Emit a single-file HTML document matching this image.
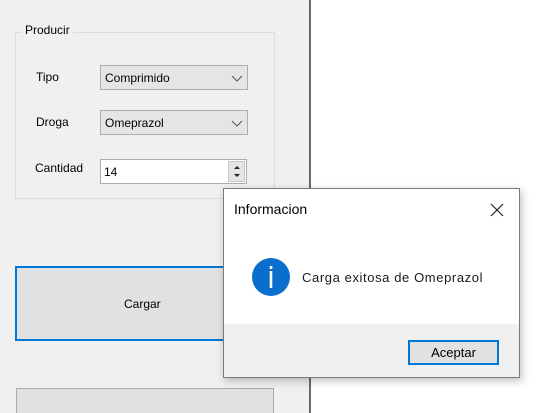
<!DOCTYPE html>
<html><head><style>
*{margin:0;padding:0;box-sizing:border-box}
html,body{width:545px;height:413px;overflow:hidden}
body{position:relative;background:#fff;font-family:"Liberation Sans",sans-serif;font-size:12px;color:#000}
.a{position:absolute}
.combo{background:#e5e5e5;border:1px solid #adadad;}
</style></head><body>
<div class="a" style="left:0;top:0;width:309px;height:413px;background:#f0f0f0"></div>
<div class="a" style="left:309px;top:0;width:2px;height:413px;background:#6a6a6a"></div>
<div class="a" style="left:15px;top:32px;width:260px;height:167px;border:1px solid #dcdcdc"></div>
<div class="a" style="left:22px;top:23px;padding:0 3px;background:#f0f0f0;font-size:12px">Producir</div>
<div class="a" style="left:36px;top:70px">Tipo</div>
<div class="a" style="left:36px;top:115px">Droga</div>
<div class="a" style="left:35px;top:161px">Cantidad</div>
<div class="a combo" style="left:100px;top:65px;width:148px;height:25px"><span class="a" style="left:4px;top:5px">Comprimido</span>
<svg class="a" style="left:130px;top:9px" width="12" height="7"><path d="M1 1l5 5 5-5" fill="none" stroke="#555" stroke-width="1"/></svg></div>
<div class="a combo" style="left:100px;top:110px;width:148px;height:25px"><span class="a" style="left:4px;top:5px">Omeprazol</span>
<svg class="a" style="left:130px;top:9px" width="12" height="7"><path d="M1 1l5 5 5-5" fill="none" stroke="#555" stroke-width="1"/></svg></div>
<div class="a" style="left:100px;top:159px;width:147px;height:25px;background:#fff;border:1px solid #adadad"><span class="a" style="left:3px;top:5px">14</span>
<div class="a" style="left:127px;top:1px;width:17px;height:21px;background:#e5e5e5;border:1px solid #c8c8c8"></div>
<svg class="a" style="left:131px;top:4px" width="10" height="16"><path d="M2 5h6L5 2z M2 10h6L5 13z" fill="#222"/></svg></div>
<div class="a" style="left:15px;top:266px;width:259px;height:75px;background:#e1e1e1;border:2px solid #0078d7"><span class="a" style="left:107px;top:29px">Cargar</span></div>
<div class="a" style="left:16px;top:388px;width:258px;height:30px;background:#e1e1e1;border:1px solid #adadad"></div>
<div class="a" style="left:223px;top:188px;width:297px;height:190px;background:#fff;border:1px solid #7a7a7a;box-shadow:2px 3px 8px rgba(0,0,0,.25)">
<div class="a" style="left:10px;top:12px;font-size:14px">Informacion</div>
<svg class="a" style="left:266px;top:14px" width="14" height="14"><path d="M1 1l12 12M13 1L1 13" stroke="#222" stroke-width="1.2"/></svg>
<div class="a" style="left:0;top:135px;width:295px;height:53px;background:#f0f0f0"></div>
<svg class="a" style="left:27px;top:68px" width="40" height="40"><circle cx="20" cy="20" r="19" fill="#0a6fcc"/><rect x="18.7" y="9" width="2.6" height="3" fill="#fff"/><rect x="18.7" y="14" width="2.6" height="17" fill="#fff"/></svg>
<div class="a" style="left:78px;top:81px;font-size:13px;letter-spacing:.6px;color:#1a1a1a">Carga exitosa de Omeprazol</div>
<div class="a" style="left:184px;top:151px;width:91px;height:25px;background:#e1e1e1;border:2px solid #0078d7;text-align:center;line-height:21px;font-size:13px">Aceptar</div>
</div>
</body></html>
